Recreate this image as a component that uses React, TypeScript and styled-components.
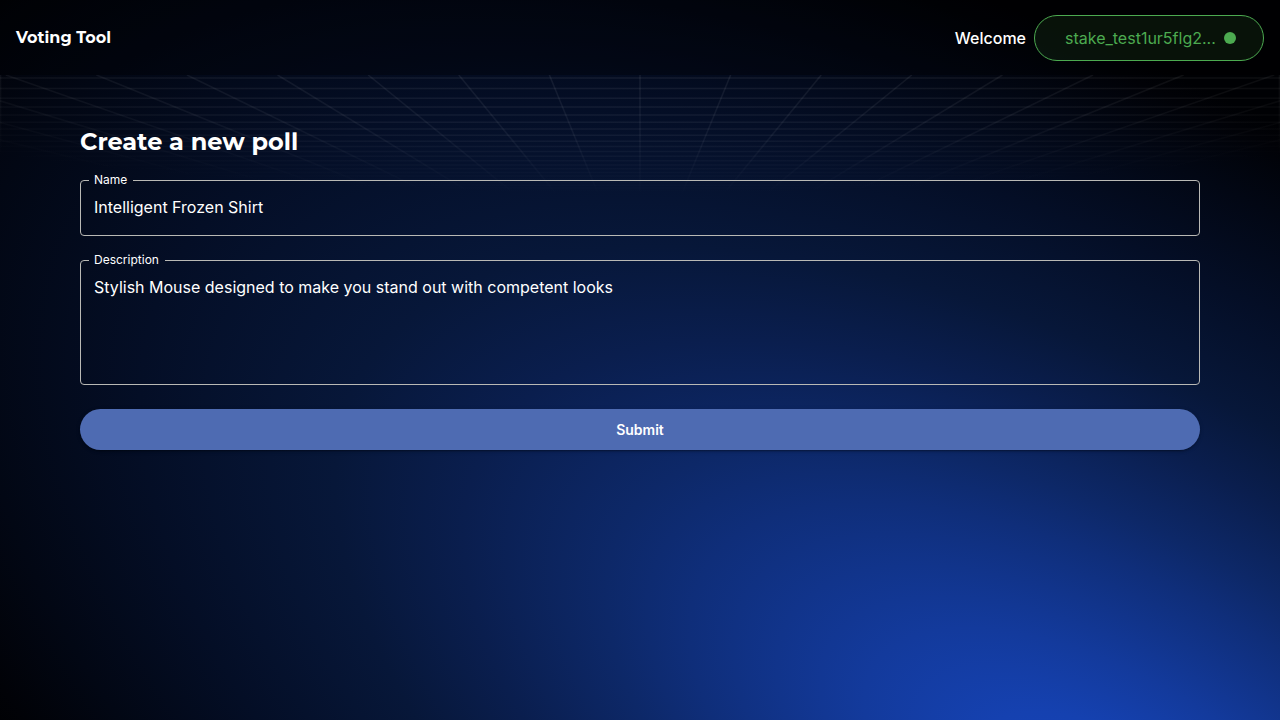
import { useState } from 'react';
import styled, { createGlobalStyle } from 'styled-components';

const GlobalStyle = createGlobalStyle`
  *, *::before, *::after { box-sizing: border-box; }
  html { background: #000; }
  body {
    margin: 0;
    color: #fff;
    font-family: Inter, "Liberation Sans", sans-serif;
    font-size: 16px;
    -webkit-font-smoothing: antialiased;
  }
`;

const Page = styled.div`
  position: relative;
  isolation: isolate;
  display: flex;
  flex-direction: column;
  min-height: 100vh;
`;

const Backdrop = styled.svg`
  position: absolute;
  inset: 0;
  z-index: -2;
  width: 100%;
  height: 100%;
`;

const Header = styled.header`
  display: flex;
  align-items: center;
  justify-content: space-between;
  padding: 15px 16px 14px;
  background: rgba(0, 0, 0, 0.3);
`;

const Brand = styled.a`
  color: #fff;
  font-family: Montserrat, Inter, sans-serif;
  font-size: 16px;
  font-weight: 700;
  line-height: 24px;
  text-decoration: none;
`;

const Account = styled.div`
  display: flex;
  align-items: center;
  gap: 8px;
  font-weight: 500;
`;

const WalletButton = styled.button`
  display: flex;
  align-items: center;
  justify-content: space-between;
  width: 230px;
  height: 46px;
  padding: 0 27px 0 30px;
  border: 1px solid #4caa50;
  border-radius: 23px;
  background: rgba(76, 175, 80, 0.1);
  color: #4caa50;
  font: inherit;
  font-weight: 400;
  cursor: pointer;
`;

const StatusDot = styled.span`
  width: 12px;
  height: 12px;
  border-radius: 50%;
  background: #4caa50;
`;

const Main = styled.main`
  position: relative;
  flex: 1;
  padding: 52px 80px 40px;
`;

const GridArt = styled.svg`
  position: absolute;
  top: 0;
  left: 0;
  z-index: -1;
  width: 100%;
`;

const Form = styled.form`
  display: flex;
  flex-direction: column;
`;

const Title = styled.h1`
  margin: 0 0 17px;
  font-family: Montserrat, Inter, sans-serif;
  font-size: 24px;
  font-weight: 700;
  line-height: 30px;
`;

const Field = styled.fieldset`
  min-width: 0;
  margin: 0 0 18px;
  padding: 0 8px;
  border: 1px solid #b9b9b5;
  border-radius: 4px;
`;

const Legend = styled.legend`
  padding: 0 6px 0 5px;
  font-size: 12px;
  line-height: 12px;
`;

const TextInput = styled.input`
  display: block;
  width: 100%;
  height: 49px;
  padding: 9px 5px 17px;
  border: 0;
  outline: 0;
  background: none;
  color: #fff;
  font: inherit;
  line-height: 23px;
`;

const TextArea = styled.textarea`
  display: block;
  width: 100%;
  padding: 10px 5px 16px;
  border: 0;
  outline: 0;
  resize: none;
  background: none;
  color: #fff;
  font: inherit;
  line-height: 23px;
`;

const SubmitButton = styled.button`
  height: 41px;
  margin-top: 6px;
  border: 0;
  border-radius: 21px;
  background: #4e6bb2;
  box-shadow: 0 3px 1px -2px rgba(0, 0, 0, 0.2), 0 2px 2px rgba(0, 0, 0, 0.14), 0 1px 5px rgba(0, 0, 0, 0.12);
  color: #fff;
  font: inherit;
  font-size: 14px;
  font-weight: 600;
  cursor: pointer;
`;

const HORIZON = 221;
const rays = Array.from({ length: 31 }, (_, i) => (i - 15) * 90.6);
const rungs = Array.from({ length: 22 }, (_, n) => HORIZON - 4274 / (19.6 + n));

function PerspectiveGrid() {
  return (
    <GridArt viewBox="0 0 1280 125" aria-hidden="true">
      <defs>
        <radialGradient id="fade" gradientUnits="userSpaceOnUse" cx="0" cy="0" r="1" gradientTransform="translate(640 -75) scale(1080 195)">
          <stop offset="0.35" stopColor="#fff" stopOpacity="0.07" />
          <stop offset="0.7" stopColor="#fff" stopOpacity="0.05" />
          <stop offset="1" stopColor="#fff" stopOpacity="0" />
        </radialGradient>
      </defs>
      <g stroke="url(#fade)" strokeWidth="1.5" fill="none">
        {rays.map((x) => (
          <path key={x} d={`M${640 + x} 0L${640 + x * 0.4} ${HORIZON * 0.6}`} />
        ))}
        {rungs.map((y) => (
          <path key={y} d={`M0 ${y}L1280 ${y + 0.001}`} />
        ))}
        <path d="M0.5 0L0.6 125M1279.5 0L1279.4 125" />
      </g>
    </GridArt>
  );
}

function Glow() {
  return (
    <Backdrop viewBox="0 0 1280 720" preserveAspectRatio="none" aria-hidden="true">
      <defs>
        <radialGradient id="glow" gradientUnits="userSpaceOnUse" cx="0" cy="0" r="1" gradientTransform="translate(1110 805) rotate(30) scale(1440 680)">
          <stop offset="0" stopColor="#1745be" />
          <stop offset="0.1" stopColor="#1541b0" />
          <stop offset="0.19" stopColor="#133a9c" />
          <stop offset="0.325" stopColor="#0f2e7a" />
          <stop offset="0.39" stopColor="#0d2868" />
          <stop offset="0.5" stopColor="#0a1e4e" />
          <stop offset="0.6" stopColor="#071739" />
          <stop offset="0.75" stopColor="#040e26" />
          <stop offset="0.88" stopColor="#020714" />
          <stop offset="0.97" stopColor="#010207" />
          <stop offset="1.0" stopColor="#000104" />
        </radialGradient>
      </defs>
      <rect width="1280" height="720" fill="url(#glow)" />
    </Backdrop>
  );
}

export default function App() {
  const [name, setName] = useState('Intelligent Frozen Shirt');
  const [description, setDescription] = useState('Stylish Mouse designed to make you stand out with competent looks');

  return (
    <Page>
      <GlobalStyle />
      <Glow />
      <Header>
        <Brand href="#">Voting Tool</Brand>
        <Account>
          <span>Welcome</span>
          <WalletButton type="button">
            stake_test1ur5flg2...
            <StatusDot />
          </WalletButton>
        </Account>
      </Header>
      <Main>
        <PerspectiveGrid />
        <Form onSubmit={(event) => event.preventDefault()}>
          <Title>Create a new poll</Title>
          <Field>
            <Legend><label htmlFor="name">Name</label></Legend>
            <TextInput id="name" value={name} onChange={(event) => setName(event.target.value)} />
          </Field>
          <Field>
            <Legend><label htmlFor="description">Description</label></Legend>
            <TextArea id="description" rows={4} value={description} onChange={(event) => setDescription(event.target.value)} />
          </Field>
          <SubmitButton type="submit">Submit</SubmitButton>
        </Form>
      </Main>
    </Page>
  );
}
